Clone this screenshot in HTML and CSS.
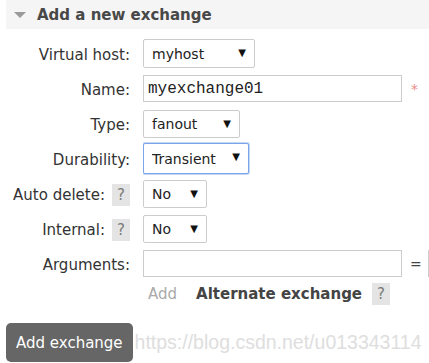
FILE: index.html
```html
<!DOCTYPE html>
<html lang="en">
<head>
  <meta charset="UTF-8">
  <title>Add a new exchange</title>
  <link rel="stylesheet" href="styles.css">
</head>
<body>
  <div class="section">
    <h2 class="section-head"><span class="toggle"></span>Add a new exchange</h2>

    <form class="exchange-form">
      <label class="field-label">Virtual host:</label>
      <div class="field">
        <span class="select w-host"><select><option>myhost</option></select></span>
      </div>

      <label class="field-label">Name:</label>
      <div class="field">
        <input type="text" class="text-input mono" value="myexchange01">
        <span class="required">*</span>
      </div>

      <label class="field-label">Type:</label>
      <div class="field">
        <span class="select w-type"><select><option>fanout</option></select></span>
      </div>

      <label class="field-label">Durability:</label>
      <div class="field">
        <span class="select w-dur focused"><select><option>Transient</option></select></span>
      </div>

      <label class="field-label">Auto delete: <span class="help">?</span></label>
      <div class="field">
        <span class="select w-bool"><select><option>No</option></select></span>
      </div>

      <label class="field-label">Internal: <span class="help">?</span></label>
      <div class="field">
        <span class="select w-bool"><select><option>No</option></select></span>
      </div>

      <label class="field-label">Arguments:</label>
      <div class="field">
        <input type="text" class="text-input">
        <span class="equals">=</span>
        <input type="text" class="text-input arg-value">
      </div>

      <div></div>
      <div class="field extras">
        <span class="add-link">Add</span>
        <span class="alt-exchange">Alternate exchange</span>
        <span class="help">?</span>
      </div>
    </form>

    <div class="actions">
      <button type="button" class="btn">Add exchange</button>
      <span class="watermark">https://blog.csdn.net/u013343114</span>
    </div>
  </div>
</body>
</html>
```

FILE: styles.css
```css
html, body {
  overflow: hidden;
}

body {
  margin: 0;
  font-family: "DejaVu Sans", Verdana, sans-serif;
  font-size: 15px;
  color: #333;
  background: #fff;
}

.section-head {
  margin: 0 0 7px 6px;
  height: 29px;
  display: flex;
  align-items: center;
  background: #f5f5f5;
  font-size: 15px;
  font-weight: bold;
  color: #484848;
}

.toggle {
  width: 0;
  height: 0;
  margin: 0 11px 0 8px;
  border-left: 6px solid transparent;
  border-right: 6px solid transparent;
  border-top: 6px solid #9a9a9a;
}

.exchange-form {
  display: grid;
  grid-template-columns: 130px minmax(0, 1fr);
  grid-auto-rows: 35px;
  column-gap: 13px;
  align-items: center;
}

.field-label {
  justify-self: end;
  display: flex;
  align-items: center;
  white-space: nowrap;
  padding-top: 3px;
}

.field {
  display: flex;
  align-items: center;
  white-space: nowrap;
  overflow: hidden;
  padding: 2px 0;
}

.help {
  display: inline-block;
  width: 18px;
  height: 22px;
  line-height: 22px;
  margin-left: 7px;
  text-align: center;
  background: #e4e4e4;
  color: #7a7a7a;
  font-size: 15px;
}

.select {
  position: relative;
  display: inline-block;
}

.select select {
  appearance: none;
  -webkit-appearance: none;
  width: 100%;
  height: 28px;
  padding: 0 0 0 8px;
  border: 1px solid #ccc;
  border-radius: 2px;
  background: #fff;
  font-family: "DejaVu Sans", Verdana, sans-serif;
  font-size: 14px;
  color: #222;
}

.select::after {
  content: "\25BC";
  position: absolute;
  right: 9px;
  top: 8px;
  font-size: 10px;
  color: #111;
  pointer-events: none;
}

.w-host { width: 112px; }
.w-host select { height: 29px; }
.w-type { width: 97px; }
.w-dur { width: 106px; }
.w-dur select { height: 31px; }
.w-bool { width: 64px; }

.focused select {
  border-color: #7aa5e8;
  box-shadow: 0 0 0 1px #c3d7f5;
}

.text-input {
  box-sizing: border-box;
  width: 259px;
  flex: none;
  height: 27px;
  padding: 0 4px;
  border: 1px solid #ccc;
  font-size: 13px;
}

.mono {
  font-family: "Liberation Mono", "Courier New", monospace;
  font-size: 16px;
  color: #222;
}

.required {
  margin-left: 9px;
  color: #f08a8a;
  font-size: 14px;
}

.equals {
  margin: 0 6px 0 8px;
  color: #444;
  font-size: 14px;
}

.arg-value {
  width: 120px;
}

.extras {
  align-self: start;
}

.add-link {
  margin-left: 5px;
  color: #aaa;
  font-size: 15px;
}

.alt-exchange {
  margin-left: 19px;
  font-size: 15px;
  font-weight: bold;
  color: #444;
}

.extras .help {
  margin-left: 10px;
}

.actions {
  margin: 7px 0 0 6px;
  display: flex;
  align-items: center;
}

.btn {
  height: 39px;
  padding: 0 10px;
  border: none;
  border-radius: 5px;
  background: #666;
  color: #fff;
  font-family: "DejaVu Sans", Verdana, sans-serif;
  font-size: 15px;
}

.watermark {
  margin-left: 2px;
  font-family: "Liberation Sans", Arial, sans-serif;
  font-size: 19.5px;
  color: #dedede;
}
```
